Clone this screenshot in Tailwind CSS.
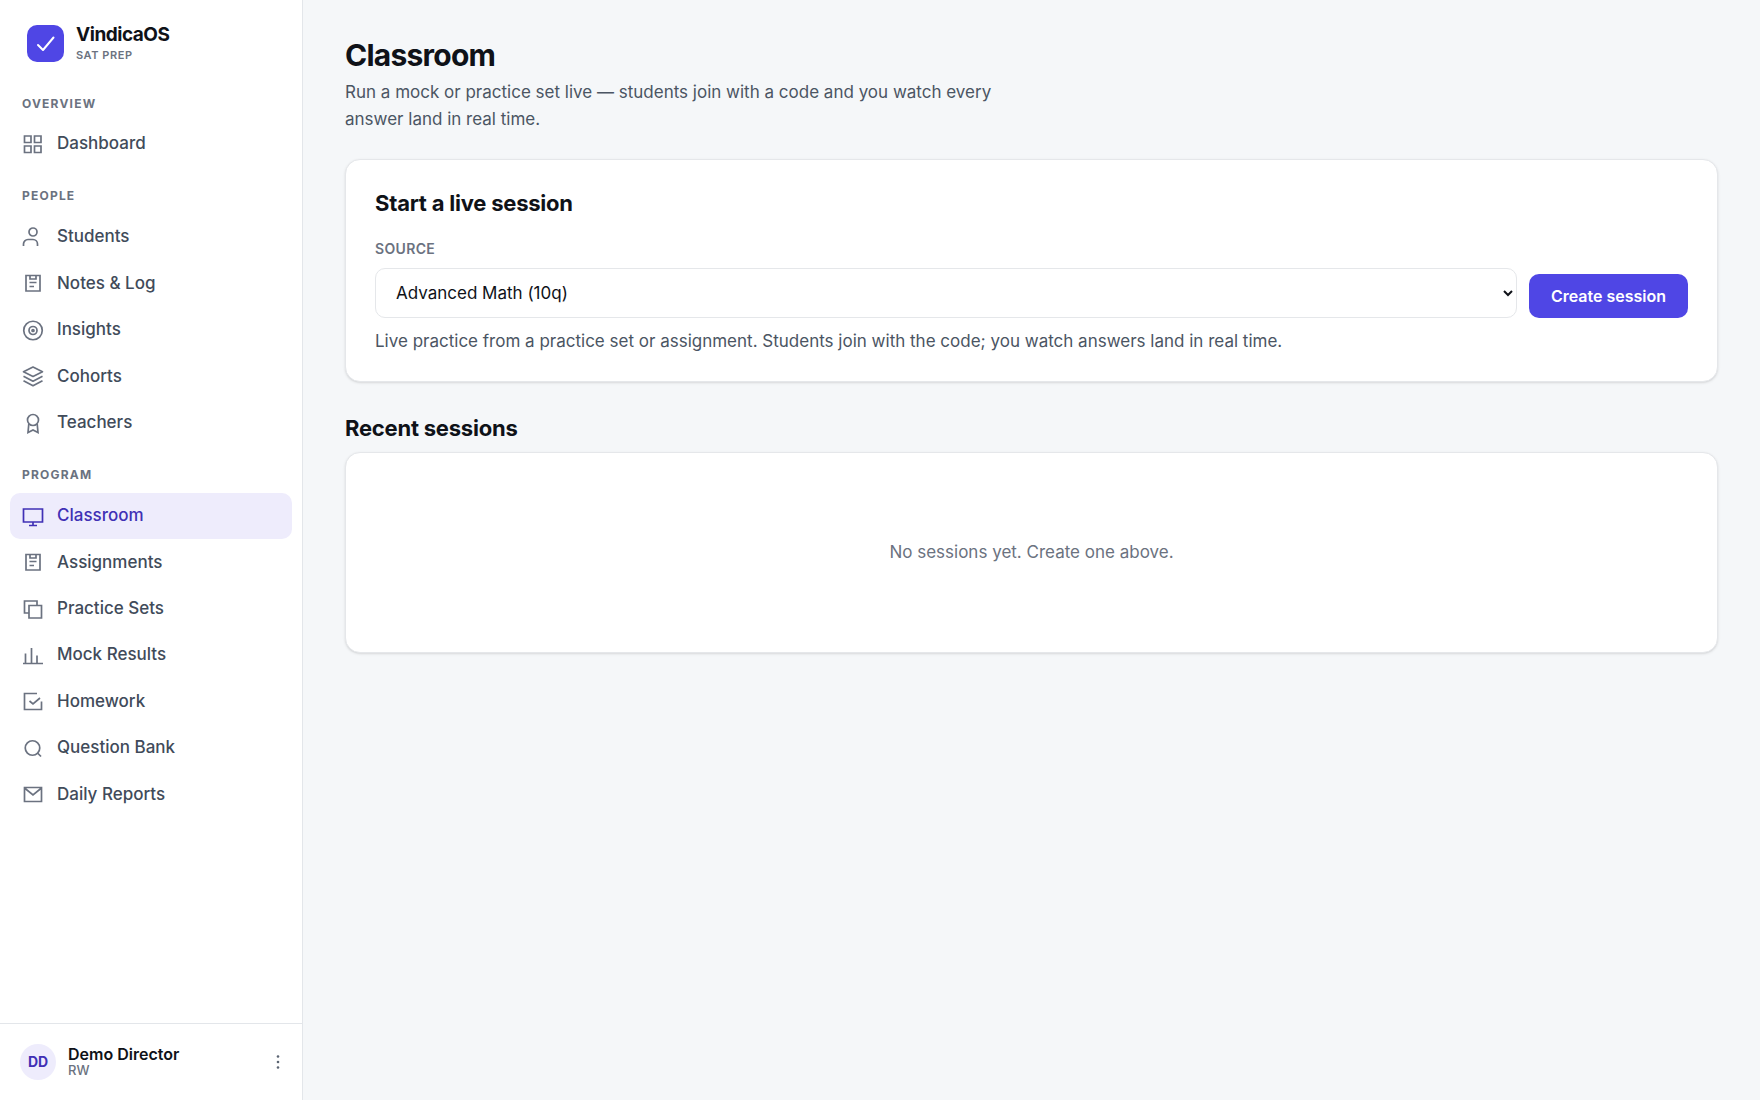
<!DOCTYPE html>
<html lang="en">
<head>
  <meta charset="UTF-8" />
  <meta name="viewport" content="width=device-width, initial-scale=1.0"/>
  <title>Classroom | VindicaOS</title>
  <script src="https://cdn.jsdelivr.net/npm/@tailwindcss/browser@4"></script>
  <style>
    body {
      font-family: Inter, sans-serif;
      background-color: #f5f7f9;
    }
    nav svg {
      width: 22px;
      height: 22px;
      flex-shrink: 0;
      fill: none;
      stroke: currentColor;
      stroke-width: 1.7;
    }
  </style>
</head>
<body class="text-[#0f1218]">
  <div class="flex min-h-screen">

    <!-- Sidebar -->
    <aside class="flex w-[303px] shrink-0 flex-col border-r border-[#e3e6ea] bg-white">
      <div class="flex items-center gap-3 px-[27px] pt-[23px]">
        <div class="flex h-[37px] w-[37px] items-center justify-center rounded-[10px] bg-[#4f46e5]">
          <svg class="h-5 w-5" viewBox="0 0 20 20" fill="none" stroke="white" stroke-width="2" stroke-linecap="round" stroke-linejoin="round"><path d="M2 11 L7 16 L17.500 3.500"/></svg>
        </div>
        <div>
          <div class="text-[19px] leading-[23px] font-bold tracking-tight">VindicaOS</div>
          <div class="text-[11px] leading-[18px] font-semibold tracking-wider text-[#6b7280]">SAT PREP</div>
        </div>
      </div>

      <nav class="flex-1 px-[10px] pt-2 text-[17px] leading-snug font-medium text-[#414b5a]">
        <h2 class="px-3 pt-[23px] pb-2 text-[12px] leading-[18px] font-bold tracking-widest text-[#6b7280]">OVERVIEW</h2>
        <ul class="flex flex-col gap-px">
          <li><a href="#" class="flex items-center gap-[13px] rounded-[10px] px-3 py-[11px]">
            <svg class="text-[#6b7280]" viewBox="0 0 22 22"><path d="M2.500 3h6.500v6.500h-6.500zM12.500 3h6.500v6.500h-6.500zM2.500 13h6.500v6.500h-6.500zM12.500 13h6.500v6.500h-6.500z"/></svg>
            Dashboard</a></li>
        </ul>

        <h2 class="px-3 pt-[21px] pb-[9px] text-[12px] leading-[18px] font-bold tracking-widest text-[#6b7280]">PEOPLE</h2>
        <ul class="flex flex-col gap-px">
          <li><a href="#" class="flex items-center gap-[13px] rounded-[10px] px-3 py-[11px]">
            <svg class="text-[#6b7280]" viewBox="0 0 22 22"><circle cx="11" cy="6" r="4"/><path d="M1.500 20v-2a4.500 4.500 0 0 1 4.500-4.500h5a4.500 4.500 0 0 1 4.500 4.500v2"/></svg>
            Students</a></li>
          <li><a href="#" class="flex items-center gap-[13px] rounded-[10px] px-3 py-[11px]">
            <svg class="text-[#6b7280]" viewBox="0 0 22 22"><path d="M4 3.500h14v15.500H4zM8 3.500v3.500h6V3.500M7.500 10.500h7M7.500 14.500h4.500"/></svg>
            Notes &amp; Log</a></li>
          <li><a href="#" class="flex items-center gap-[13px] rounded-[10px] px-3 py-[11px]">
            <svg class="text-[#6b7280]" viewBox="0 0 22 22"><circle cx="11" cy="11.500" r="9.250"/><circle cx="11" cy="11.500" r="4"/><circle cx="11" cy="11.500" r="1"/></svg>
            Insights</a></li>
          <li><a href="#" class="flex items-center gap-[13px] rounded-[10px] px-3 py-[11px]">
            <svg class="text-[#6b7280]" viewBox="0 0 22 22"><path d="M11 2l9.500 4.700-9.500 4.700-9.500-4.700zM1.500 11.200l9.500 5 9.500-5M1.500 15.700l9.500 5 9.500-5" stroke-linejoin="round"/></svg>
            Cohorts</a></li>
          <li><a href="#" class="flex items-center gap-[13px] rounded-[10px] px-3 py-[11px]">
            <svg class="text-[#6b7280]" viewBox="0 0 22 22"><circle cx="11" cy="8" r="5.500"/><path d="M6.800 12L6 20.500l5-2.500 5 2.500-.800-8.500"/></svg>
            Teachers</a></li>
        </ul>

        <h2 class="px-3 pt-[21px] pb-[9px] text-[12px] leading-[18px] font-bold tracking-widest text-[#6b7280]">PROGRAM</h2>
        <ul class="flex flex-col gap-px">
          <li><a href="#" aria-current="page" class="flex items-center gap-[13px] rounded-[10px] bg-[#eeecfc] px-3 py-[11px] text-[#4030b5]">
            <svg viewBox="0 0 22 22"><path d="M1.500 4h19v13h-19zM11 17v3.500M7 20.500h8"/></svg>
            Classroom</a></li>
          <li><a href="#" class="flex items-center gap-[13px] rounded-[10px] px-3 py-[11px]">
            <svg class="text-[#6b7280]" viewBox="0 0 22 22"><path d="M4 3.500h14v15.500H4zM8 3.500v3.500h6V3.500M7.500 10.500h7M7.500 14.500h4.500"/></svg>
            Assignments</a></li>
          <li><a href="#" class="flex items-center gap-[13px] rounded-[10px] px-3 py-[11px]">
            <svg class="text-[#6b7280]" viewBox="0 0 22 22"><path d="M7 7.500h12.500v12.500H7zM7 15H2.500V3h12.500v4.500"/></svg>
            Practice Sets</a></li>
          <li><a href="#" class="flex items-center gap-[13px] rounded-[10px] px-3 py-[11px]">
            <svg class="text-[#6b7280]" viewBox="0 0 22 22"><path d="M1 19.500h20M3.500 19.500V9.500M9.500 19.500V4M15 19.500v-8"/></svg>
            Mock Results</a></li>
          <li><a href="#" class="flex items-center gap-[13px] rounded-[10px] px-3 py-[11px]">
            <svg class="text-[#6b7280]" viewBox="0 0 22 22"><path d="M15 3.500H2.500v16h17v-8M7.500 11l3.500 3 7-6"/></svg>
            Homework</a></li>
          <li><a href="#" class="flex items-center gap-[13px] rounded-[10px] px-3 py-[11px]">
            <svg class="text-[#6b7280]" viewBox="0 0 22 22"><circle cx="10.500" cy="11" r="7.250"/><path d="M15.500 16l3.500 3.500"/></svg>
            Question Bank</a></li>
          <li><a href="#" class="flex items-center gap-[13px] rounded-[10px] px-3 py-[11px]">
            <svg class="text-[#6b7280]" viewBox="0 0 22 22"><path d="M2.500 4.500h17v14h-17zM2.500 5l8.500 7 8.500-7"/></svg>
            Daily Reports</a></li>
        </ul>
      </nav>

      <div class="flex items-center gap-3 border-t border-[#e3e6ea] py-5 pr-[14px] pl-5">
        <div class="flex h-9 w-9 items-center justify-center rounded-full bg-[#eeecfc] text-[14px] leading-[18px] font-bold text-[#4030b5]">DD</div>
        <div class="flex-1 pb-[2px]">
          <div class="text-[16px] leading-[18px] font-semibold">Demo Director</div>
          <div class="text-[13px] leading-[14px] font-medium text-[#6b7280]">RW</div>
        </div>
        <button type="button" aria-label="Account menu" class="flex h-5 w-5 items-center justify-center text-[#5b6472]">
          <svg class="h-4 w-4" viewBox="0 0 16 16" fill="currentColor"><circle cx="8" cy="2.500" r="1.300"/><circle cx="8" cy="8" r="1.300"/><circle cx="8" cy="13.500" r="1.300"/></svg>
        </button>
      </div>
    </aside>

    <!-- Main content -->
    <main class="min-w-0 flex-1 px-[42px] pt-9">
      <h1 class="text-[30px] leading-[38px] font-bold tracking-tight">Classroom</h1>
      <p class="mt-[5px] max-w-[660px] text-[17px] leading-[27px] text-[#4b5563]">
        Run a mock or practice set live — students join with a code and you watch every answer land in real time.
      </p>

      <section class="mt-[26px] rounded-[15px] border border-[#e5e7ea] bg-white px-[29px] pt-7 pb-[26px] shadow-sm">
        <h2 class="text-[22px] leading-[30px] font-bold tracking-[-0.01em]">Start a live session</h2>
        <form class="mt-[22px] flex items-end gap-3">
          <div class="min-w-0 flex-1">
            <label for="source" class="block text-[14px] leading-[18px] font-semibold tracking-wide text-[#6b7280]">SOURCE</label>
            <select id="source" class="mt-[10px] block h-[50px] w-full rounded-[10px] border border-[#e5e7ea] bg-white pl-4 text-[17px]">
              <option>Advanced Math (10q)</option>
            </select>
          </div>
          <button type="submit" class="h-11 rounded-[10px] bg-[#4f46e5] px-[22px] text-[16px] font-semibold text-white">Create session</button>
        </form>
        <p class="mt-[10px] text-[17px] leading-[27px] text-[#4b5563]">Live practice from a practice set or assignment. Students join with the code; you watch answers land in real time.</p>
      </section>

      <h2 class="mt-[31px] text-[22px] leading-[30px] font-bold tracking-[-0.01em]">Recent sessions</h2>
      <section class="mt-[9px] flex items-center justify-center rounded-[15px] border border-[#e5e7ea] bg-white px-6 py-[86px] shadow-sm">
        <p class="text-[17px] leading-[27px] text-[#6b7280]">No sessions yet. Create one above.</p>
      </section>
    </main>
  </div>
</body>
</html>
